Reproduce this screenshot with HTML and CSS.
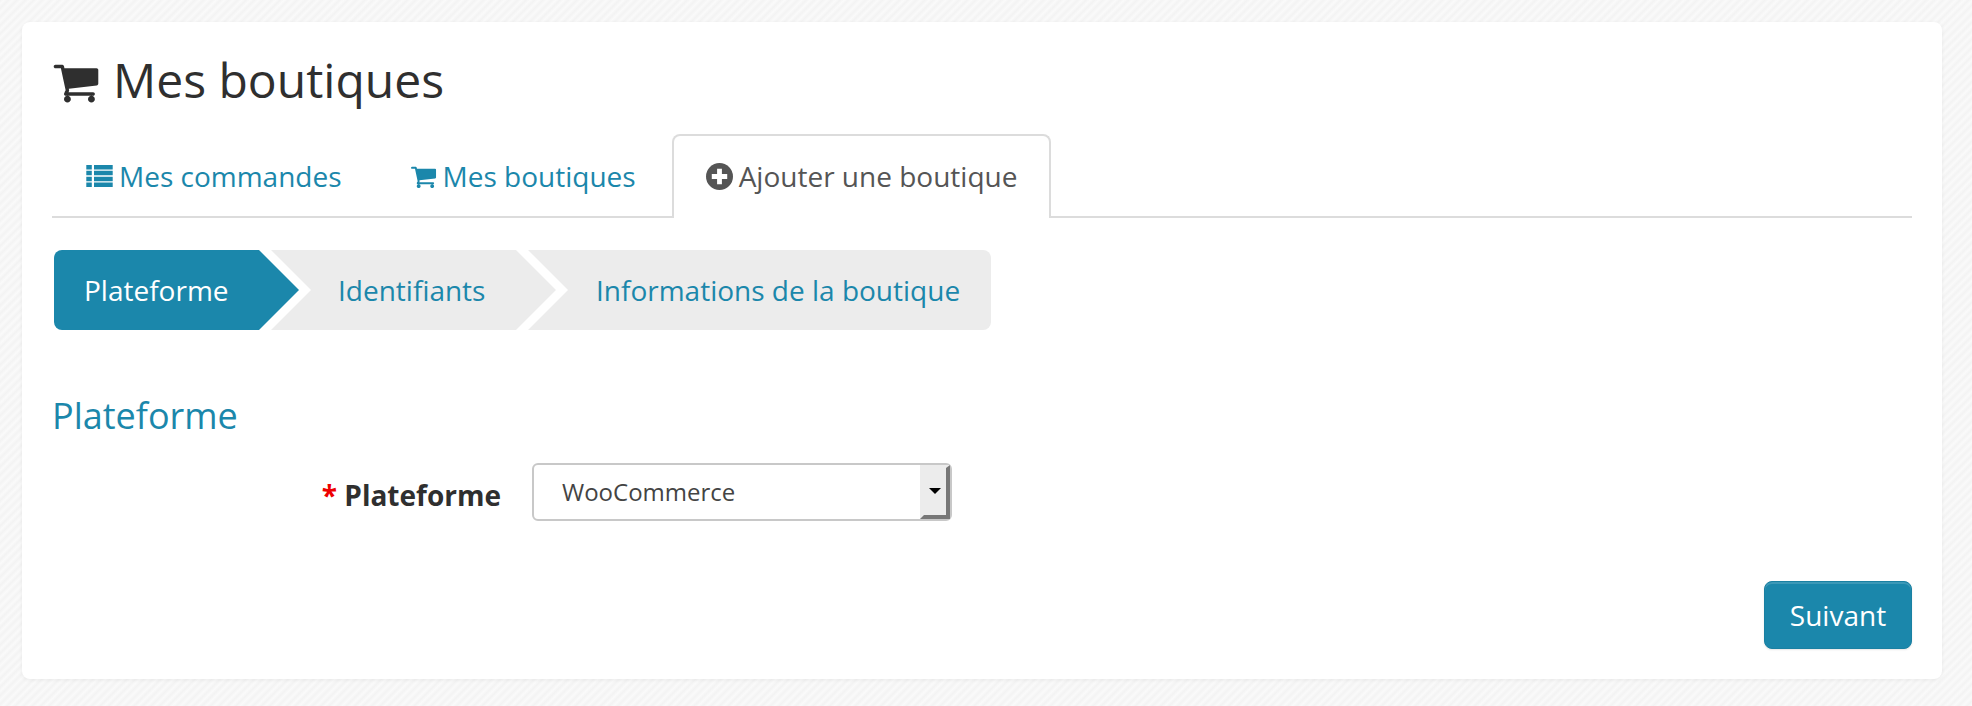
FILE: index.html
```html
<!DOCTYPE html>
<html lang="fr">
<head>
<meta charset="utf-8">
<title>Mes boutiques</title>
<link rel="stylesheet" href="styles.css">
</head>
<body>
<main class="card">
  <h1 class="title">
    <svg class="icon-title" viewBox="0 0 1792 1792"><use href="#cart"/></svg>
    <span>Mes boutiques</span>
  </h1>
  <svg class="defs" width="0" height="0"><defs>
    <path id="cart" d="M704 1536q0 52-38 90t-90 38-90-38-38-90 38-90 90-38 90 38 38 90zm896 0q0 52-38 90t-90 38-90-38-38-90 38-90 90-38 90 38 38 90zm128-1088v512q0 24-16.500 42.500t-40.500 21.500l-1044 122q13 60 13 70 0 16-24 64h920q26 0 45 19t19 45-19 45-45 19h-1024q-26 0-45-19t-19-45q0-11 8-31.500t16-36 21.500-40 15.500-29.500l-177-823h-204q-26 0-45-19t-19-45 19-45 45-19h256q16 0 28.500 6.500t19.500 15.500 13 24.500 8 26 5.500 29.500 4.500 26h1201q26 0 45 19t19 45z"/>
  </defs></svg>
  <nav class="tabs">
    <a class="tab">
      <svg class="icon-tab" viewBox="0 0 24 20"><path d="M0 0h5v4H0zM7 0h17v4H7zM0 5.300h5v4H0zM7 5.300h17v4H7zM0 10.700h5v4H0zM7 10.700h17v4H7zM0 16h5v4H0zM7 16h17v4H7z"/></svg>
      Mes commandes
    </a>
    <a class="tab">
      <svg class="icon-tab icon-cart" viewBox="0 0 1792 1792"><use href="#cart"/></svg>
      Mes boutiques
    </a>
    <a class="tab tab-active">
      <svg class="icon-plus" viewBox="0 0 28 28"><circle cx="14" cy="14" r="14"/><path class="plus" d="M11.500 6h5v5.500H22v5h-5.500V22h-5v-5.500H6v-5h5.500z"/></svg>
      Ajouter une boutique
    </a>
  </nav>
  <ol class="steps">
    <li class="step step-1 step-on">Plateforme</li>
    <li class="step step-2">Identifiants</li>
    <li class="step step-3">Informations de la boutique</li>
  </ol>
  <h2 class="section">Plateforme</h2>
  <div class="field">
    <label class="label"><span class="req">*</span> Plateforme</label>
    <div class="select">
      <span class="select-value">WooCommerce</span>
      <span class="select-btn"><i class="caret"></i></span>
    </div>
  </div>
  <div class="actions"><button class="btn">Suivant</button></div>
</main>
</body>
</html>
```

FILE: styles.css
```css
* { box-sizing: border-box; }
html, body { margin: 0; height: 100%; }
body {
  padding: 22px 30px 26px 22px;
  font-family: "Open Sans", sans-serif;
  color: #2f2f2f;
  overflow: hidden;
  background-color: #f6f6f6;
  background-image: repeating-linear-gradient(135deg, #f3f3f3 0, #fafafa 3px, #f3f3f3 6px);
}
.card {
  width: 1920px;
  height: 657px;
  padding: 25px 30px 30px;
  background: #fff;
  border-radius: 8px;
  box-shadow: 0 1px 4px rgba(0,0,0,.06);
}
.title {
  display: flex;
  align-items: center;
  gap: 13px;
  margin: 0;
  height: 66px;
  font-size: 48px;
  font-weight: 400;
  line-height: 66px;
}
.defs { position: absolute; }
.icon-title { width: 48px; height: 48px; fill: #2f2f2f; margin-top: 3px; flex: none; }
.tabs {
  display: flex;
  margin-top: 21px;
  height: 84px;
  border-bottom: 2px solid #dcdcdc;
  padding-left: 0;
}
.tab {
  display: flex;
  align-items: center;
  gap: 6px;
  height: 84px;
  padding: 0 32px 2px;
  font-size: 28px;
  color: #1b87ab;
  border: 2px solid transparent;
  border-bottom: 0;
  border-radius: 8px 8px 0 0;
}
.tab-active {
  color: #555;
  background: #fff;
  border-color: #dcdcdc;
  margin-left: 2px;
}
.icon-tab { width: 27px; height: 22px; fill: #1b87ab; flex: none; }
.icon-cart { height: 27px; }
.icon-plus { width: 27px; height: 27px; flex: none; fill: #555; }
.plus { fill: #fff; }
.steps {
  display: flex;
  list-style: none;
  margin: 32px 0 0 2px;
  padding: 0;
  height: 80px;
  font-size: 28px;
}
.step {
  display: flex;
  align-items: center;
  height: 80px;
  flex: none;
  padding-bottom: 1px;
  color: #1b87ab;
  background: #ececec;
}
.step-1 {
  width: 245px;
  padding-left: 30px;
  color: #fff;
  background: #1b87ab;
  border-radius: 8px 0 0 8px;
  clip-path: polygon(0 0, 205px 0, 245px 50%, 205px 100%, 0 100%);
}
.step-2 {
  width: 285px;
  margin-left: -28px;
  padding-left: 67px;
  clip-path: polygon(0 0, 245px 0, 285px 50%, 245px 100%, 0 100%, 40px 50%);
}
.step-3 {
  width: 463px;
  margin-left: -28px;
  padding-left: 68px;
  border-radius: 0 8px 8px 0;
  clip-path: polygon(0 0, 100% 0, 100% 100%, 0 100%, 40px 50%);
}
.section {
  margin: 64px 0 0;
  font-size: 36px;
  font-weight: 400;
  line-height: 44px;
  color: #1b87ab;
}
.field {
  display: flex;
  align-items: center;
  margin-top: 25px;
  height: 58px;
}
.label {
  width: 449px;
  padding-top: 6px;
  font-size: 28px;
  font-weight: 700;
  text-align: right;
}
.req { color: #e00; }
.select {
  display: flex;
  justify-content: space-between;
  width: 420px;
  height: 58px;
  margin-left: 31px;
  border: 2px solid #c8c8c8;
  border-radius: 6px;
  background: #fff;
  font-size: 24px;
  color: #444;
}
.select-value { padding-left: 28px; line-height: 54px; }
.select-btn {
  display: flex;
  align-items: center;
  justify-content: center;
  width: 30px;
  height: 54px;
  background: #ececec;
  border-style: solid;
  border-width: 3px 4px 4px 4px;
  border-color: #ececec #777 #777 #ececec;
}
.caret {
  width: 0; height: 0;
  border-style: solid;
  border-width: 6px 6px 0;
  border-color: #000 transparent transparent;
  margin-top: -2px;
}
.actions {
  display: flex;
  justify-content: flex-end;
  margin-top: 60px;
}
.btn {
  width: 148px;
  height: 68px;
  font: 28px "Open Sans", sans-serif;
  color: #fff;
  background: #1b87ab;
  border: 1px solid #1a80a2;
  border-radius: 8px;
  box-shadow: inset 0 2px 0 rgba(255,255,255,.15), 0 1px 2px rgba(0,0,0,.1);
}
```
